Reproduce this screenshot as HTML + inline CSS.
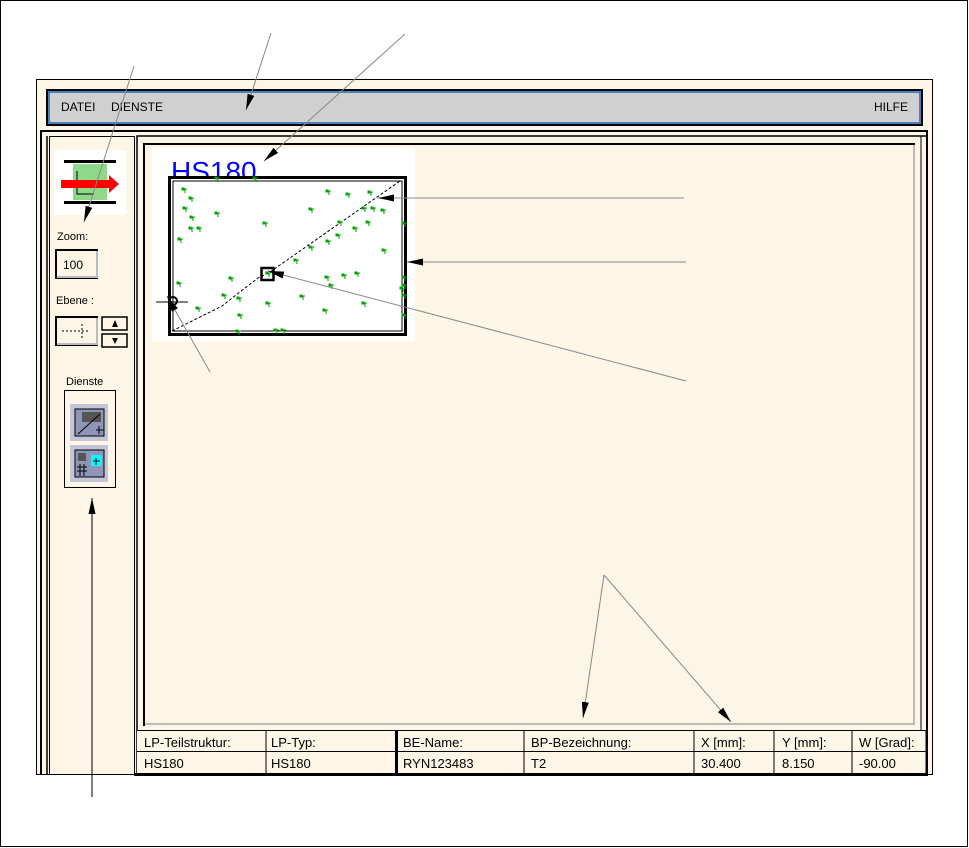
<!DOCTYPE html>
<html><head><meta charset="utf-8"><style>
html,body{margin:0;padding:0;background:#fff;}
svg{display:block;}
text{font-family:"Liberation Sans",sans-serif;}
</style></head><body>
<svg width="969" height="848" viewBox="0 0 969 848" xmlns="http://www.w3.org/2000/svg">
<defs>
<marker id="ah" viewBox="0 0 16 7" refX="16" refY="3.5" markerWidth="16" markerHeight="7" markerUnits="userSpaceOnUse" orient="auto"><path d="M0,0 L16,3.5 L0,7 Z" fill="#000"/></marker>
<g id="gm"><rect x="-1.5" y="-1.5" width="3" height="3" fill="#00a000"/><path d="M0,0 h4 M2,0 v4" stroke="#00a000" stroke-width="1"/></g>
</defs>
<rect x="0.5" y="0.5" width="967" height="846" fill="#fff" stroke="#000"/>
<!-- window -->
<rect x="36.5" y="79.5" width="896" height="695" fill="#fdf5e6" stroke="#000"/>
<rect x="46" y="89" width="877" height="37" fill="#000"/>
<rect x="48" y="91" width="873" height="33" fill="#4a80b8"/>
<rect x="50" y="93" width="869" height="29" fill="#d0d0d0"/>
<text x="61" y="111" font-size="12">DATEI</text>
<text x="111" y="111" font-size="12">DIENSTE</text>
<text x="874" y="111" font-size="12">HILFE</text>
<!-- lower frame lines -->
<path d="M41,775 V131 H927 V775" fill="none" stroke="#000" stroke-width="2"/>
<path d="M47,775 V136" stroke="#000" stroke-width="1.5"/>
<path d="M49.5,775 V136.5 H134.5 V775" fill="none" stroke="#000"/>
<path d="M137,775 V136 H926" fill="none" stroke="#000" stroke-width="1.5"/>
<path d="M921,136 V730" stroke="#000" stroke-width="1"/>
<path d="M144,726 V144 H915" fill="none" stroke="#000" stroke-width="2"/>
<path d="M145,724 H914 V145" fill="none" stroke="#bbb" stroke-width="2"/>
<!-- left panel icon -->
<rect x="54" y="150" width="72" height="65" fill="#fff"/>
<rect x="73" y="164" width="34" height="36" fill="#8fd88a"/>
<rect x="64" y="160" width="52" height="3" fill="#000"/>
<rect x="64" y="201" width="52" height="3" fill="#000"/>
<path d="M77,171 V194 H94" stroke="#000" fill="none"/>
<rect x="61" y="180" width="50" height="8" fill="#f00"/>
<path d="M109,175 L119,184 L109,193 Z" fill="#f00"/>
<text x="57" y="240" font-size="11" font-family="DejaVu Sans Mono,monospace">Zoom:</text>
<rect x="56" y="250" width="41" height="28" fill="#fdf5e6" stroke="#000" stroke-width="2"/>
<path d="M57,277 H97 V251" stroke="#bbb" stroke-width="2" fill="none"/>
<text x="63" y="269" font-size="12">100</text>
<text x="56" y="304" font-size="11" font-family="Liberation Serif,serif">Ebene :</text>
<rect x="56" y="317" width="41" height="28" fill="#fdf5e6" stroke="#000" stroke-width="2"/>
<path d="M57,344 H97 V318" stroke="#bbb" stroke-width="2" fill="none"/>
<path d="M62,331 H88 M82,324 V338" stroke="#000" stroke-dasharray="2,2"/>
<rect x="102" y="317" width="25" height="13" fill="#fdf5e6" stroke="#000" stroke-width="1.5"/>
<path d="M112,327 L115,320 L118,327Z" fill="#000"/>
<rect x="102" y="334" width="25" height="13" fill="#fdf5e6" stroke="#000" stroke-width="1.5"/>
<path d="M112,338 L118,338 L115,344Z" fill="#000"/>
<text x="66" y="385" font-size="11">Dienste</text>
<rect x="64.5" y="390.5" width="51" height="97" fill="#fdf5e6" stroke="#000"/>
<rect x="70" y="404" width="38" height="37" fill="#c4c4d8"/>
<rect x="75" y="409" width="29" height="27" fill="#8e96b8" stroke="#000"/>
<rect x="82" y="412" width="19" height="10" fill="#555"/>
<path d="M78,434 L100,414 M96,430 H104 M99,426 V434" stroke="#000"/>
<rect x="70" y="445" width="38" height="37" fill="#c4c4d8"/>
<rect x="75" y="450" width="29" height="27" fill="#8e96b8" stroke="#000"/>
<rect x="78" y="453" width="8" height="8" fill="#555"/>
<rect x="91" y="455" width="11" height="11" fill="#0ff"/>
<path d="M93,461 H100 M96,458 V465 M77,467 H87 M77,471 H87 M80,464 V476 M84,464 V476" stroke="#000"/>
<!-- drawing -->
<rect x="152" y="148" width="263" height="194" fill="#fff"/>
<text x="171" y="181" font-size="28" fill="#0000ff">HS180</text>
<rect x="169.5" y="177.5" width="236" height="157" fill="#fff" stroke="#000" stroke-width="3"/>
<rect x="173" y="181" width="229" height="150" fill="none" stroke="#000" stroke-width="1"/>
<path d="M172,331 L222,306 L236,295 L258,278 L270,272 L400,181" stroke="#000" stroke-dasharray="3,2" fill="none"/>
<rect x="261.5" y="268" width="12" height="12" fill="none" stroke="#000" stroke-width="2.5"/>
<circle cx="173" cy="301" r="4" fill="none" stroke="#000" stroke-width="2"/>
<path d="M156,302 H188" stroke="#000"/>
<g>
<use href="#gm" x="183" y="189"/><use href="#gm" x="190" y="198"/><use href="#gm" x="184" y="208"/><use href="#gm" x="191" y="217"/><use href="#gm" x="190" y="228"/><use href="#gm" x="198" y="228"/><use href="#gm" x="179" y="239"/><use href="#gm" x="216" y="213"/><use href="#gm" x="264" y="223"/><use href="#gm" x="310" y="209"/><use href="#gm" x="327" y="191"/><use href="#gm" x="347" y="194"/><use href="#gm" x="369" y="192"/><use href="#gm" x="363" y="208"/><use href="#gm" x="372" y="208"/><use href="#gm" x="382" y="210"/><use href="#gm" x="339" y="222"/><use href="#gm" x="367" y="222"/><use href="#gm" x="354" y="228"/><use href="#gm" x="337" y="235"/><use href="#gm" x="327" y="241"/><use href="#gm" x="310" y="247"/><use href="#gm" x="383" y="250"/><use href="#gm" x="295" y="260"/><use href="#gm" x="267" y="273"/><use href="#gm" x="326" y="277"/><use href="#gm" x="343" y="275"/><use href="#gm" x="356" y="273"/><use href="#gm" x="330" y="285"/><use href="#gm" x="301" y="296"/><use href="#gm" x="267" y="303"/><use href="#gm" x="238" y="298"/><use href="#gm" x="230" y="278"/><use href="#gm" x="223" y="295"/><use href="#gm" x="239" y="315"/><use href="#gm" x="197" y="308"/><use href="#gm" x="178" y="283"/><use href="#gm" x="324" y="310"/><use href="#gm" x="363" y="303"/><use href="#gm" x="237" y="331"/><use href="#gm" x="275" y="330"/><use href="#gm" x="282" y="330"/><use href="#gm" x="216" y="178"/><use href="#gm" x="254" y="178"/><use href="#gm" x="403" y="223"/><use href="#gm" x="403" y="277"/><use href="#gm" x="403" y="285"/><use href="#gm" x="403" y="295"/><use href="#gm" x="403" y="315"/><use href="#gm" x="401" y="288"/>
</g>
<!-- table -->
<rect x="137" y="730" width="789" height="43" fill="#fdf5e6"/>
<path d="M137,730.5 H926 M137,751.5 H926" stroke="#000"/>
<path d="M134,774.5 H928" stroke="#000" stroke-width="3"/>
<g stroke="#000"><path d="M266,730 V773 M524,730 V773 M694,730 V773 M774,730 V773 M852,730 V773 M926,730 V773"/><path d="M396.5,730 V773" stroke-width="3"/></g>
<g font-size="13">
<text x="144" y="747">LP-Teilstruktur:</text><text x="271" y="747">LP-Typ:</text><text x="403" y="747">BE-Name:</text><text x="531" y="747">BP-Bezeichnung:</text><text x="701" y="747">X [mm]:</text><text x="782" y="747">Y [mm]:</text><text x="859" y="747">W [Grad]:</text>
<text x="144" y="768">HS180</text><text x="271" y="768">HS180</text><text x="403" y="768">RYN123483</text><text x="531" y="768">T2</text><text x="701" y="768">30.400</text><text x="782" y="768">8.150</text><text x="859" y="768">-90.00</text>
</g>
<!-- annotations -->
<g stroke="#888" stroke-width="1" fill="none" marker-end="url(#ah)">
<path d="M134,66 L84,222"/>
<path d="M271,33 L246,110"/>
<path d="M405,34 L264,161"/>
<path d="M684,198 L378,198"/>
<path d="M686,262 L407,262"/>
<path d="M686,381 L268,271"/>
<path d="M210,372 L167,296"/>
<path d="M604,575 L583,718"/>
<path d="M604,575 L731,722"/>
</g>
<path d="M92,797 V498" stroke="#000" marker-end="url(#ah)"/>
</svg>
</body></html>
